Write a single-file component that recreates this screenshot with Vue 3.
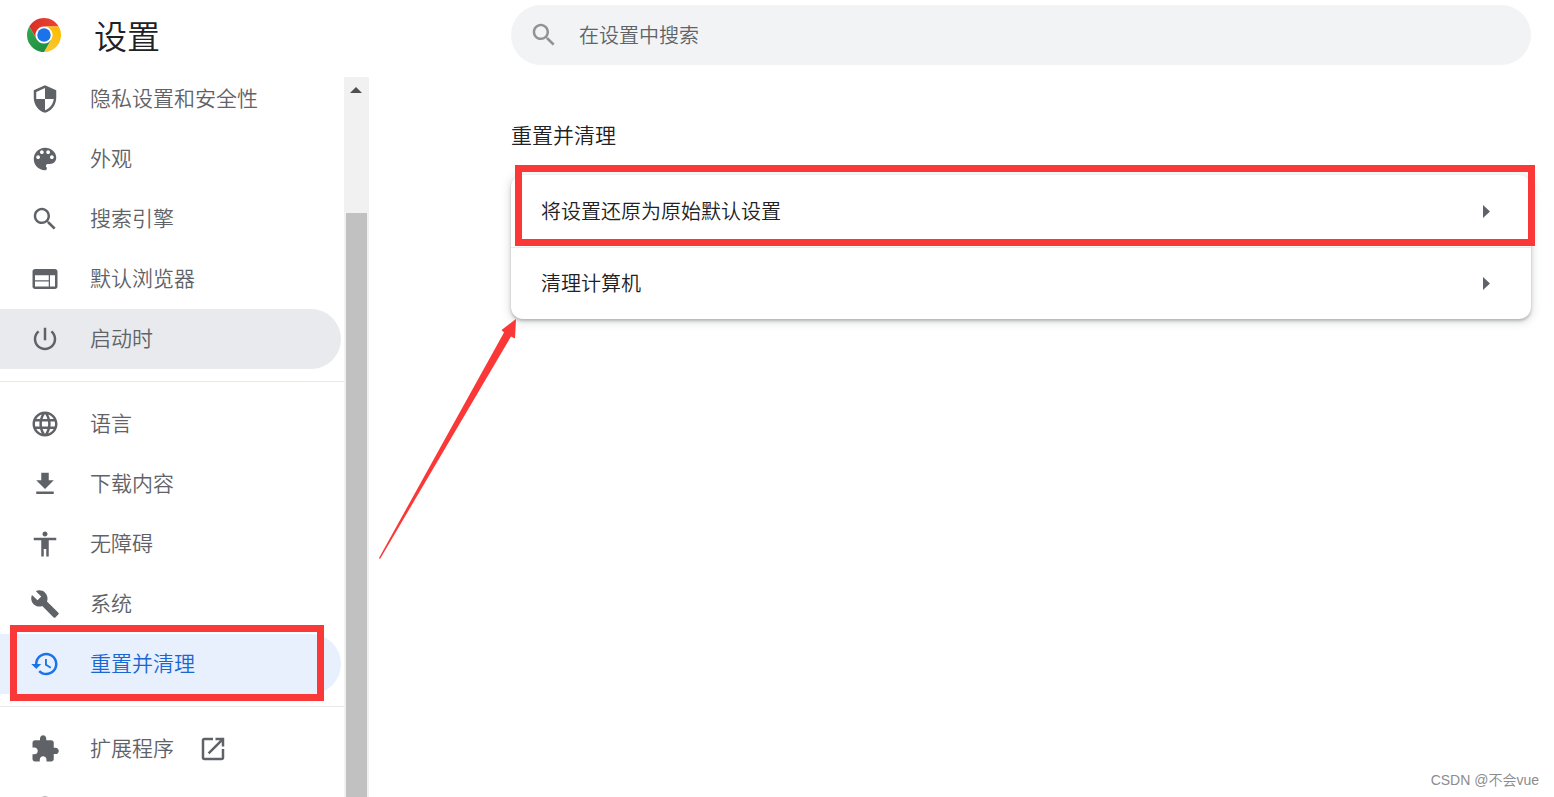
<template>
  <div class="settings">
    <header class="toolbar">
      <div class="brand">
        <svg class="logo" viewBox="0 0 48 48" aria-hidden="true">
          <defs>
            <linearGradient id="red" x1="3" y1="15" x2="45" y2="15" gradientUnits="userSpaceOnUse">
              <stop offset="0" stop-color="#d93025" />
              <stop offset="1" stop-color="#ea4335" />
            </linearGradient>
            <linearGradient id="yellow" x1="21" y1="48" x2="41" y2="12" gradientUnits="userSpaceOnUse">
              <stop offset="0" stop-color="#fcc934" />
              <stop offset="1" stop-color="#fbbc04" />
            </linearGradient>
            <linearGradient id="green" x1="27" y1="47" x2="6" y2="10" gradientUnits="userSpaceOnUse">
              <stop offset="0" stop-color="#1e8e3e" />
              <stop offset="1" stop-color="#34a853" />
            </linearGradient>
          </defs>
          <circle cx="24" cy="24" r="12" fill="#fff" />
          <path fill="url(#red)" d="M24 12h20.78a24 24 0 0 0-41.56 0L13.61 30A11.99 11.99 0 0 1 24 12z" />
          <path fill="url(#yellow)" d="M34.39 30 24 48a24 24 0 0 0 20.78-36H24a11.99 11.99 0 0 1 10.39 18z" />
          <path fill="url(#green)" d="M13.61 30 3.22 12A24 24 0 0 0 24 48l10.39-18a11.99 11.99 0 0 1-20.78 0z" />
          <circle cx="24" cy="24" r="9.5" fill="#1a73e8" />
        </svg>
        <h1>设置</h1>
      </div>
      <label class="search">
        <svg class="icon" viewBox="0 0 24 24" aria-hidden="true"><path :d="icons.search" /></svg>
        <input v-model="query" type="text" placeholder="在设置中搜索" aria-label="在设置中搜索" />
      </label>
    </header>

    <div class="content">
      <aside class="sidebar">
        <nav class="menu">
          <ul v-for="(group, i) in groups" :key="i">
            <li v-for="item in group" :key="item.icon">
              <a
                href="#"
                :class="{ hovered: item.hovered, selected: item.icon === current }"
                @click.prevent="current = item.icon"
              >
                <svg class="icon" viewBox="0 0 24 24" aria-hidden="true"><path :d="icons[item.icon]" /></svg>
                <span v-if="item.label">{{ item.label }}</span>
                <svg v-if="item.external" class="icon" viewBox="0 0 24 24" aria-hidden="true">
                  <path :d="icons.launch" />
                </svg>
              </a>
              <div v-if="item.marked" class="mark"></div>
            </li>
          </ul>
        </nav>
        <div class="scrollbar" aria-hidden="true">
          <svg class="scroll-up" viewBox="0 0 12 6"><path d="M0 6l6-6 6 6z" /></svg>
          <div class="thumb"></div>
        </div>
      </aside>

      <main>
        <h2>重置并清理</h2>
        <div class="card">
          <button v-for="row in rows" :key="row" type="button">
            <span>{{ row }}</span>
            <svg class="chevron" viewBox="0 0 7 13" aria-hidden="true"><path d="M0 0l7 6.5L0 13z" /></svg>
          </button>
          <div class="mark"></div>
          <svg class="arrow" viewBox="0 0 138 240" aria-hidden="true">
            <path d="M137 0L122.5 11L125 13.5L0 239L1 240L132 17.5L136 19.5z" />
          </svg>
        </div>
      </main>
    </div>

    <p class="credit">CSDN @不会vue</p>
  </div>
</template>

<script setup>
import { ref } from 'vue'

const query = ref('')
const current = ref('restore')

const groups = [
  [
    { label: '隐私设置和安全性', icon: 'security' },
    { label: '外观', icon: 'palette' },
    { label: '搜索引擎', icon: 'search' },
    { label: '默认浏览器', icon: 'web' },
    { label: '启动时', icon: 'power', hovered: true },
  ],
  [
    { label: '语言', icon: 'language' },
    { label: '下载内容', icon: 'download' },
    { label: '无障碍', icon: 'accessibility' },
    { label: '系统', icon: 'build' },
    { label: '重置并清理', icon: 'restore', marked: true },
  ],
  [
    { label: '扩展程序', icon: 'extension', external: true },
    { icon: 'chrome' },
  ],
]

const rows = ['将设置还原为原始默认设置', '清理计算机']

const icons = {
  security: 'M12 1L3 5v6c0 5.55 3.84 10.74 9 12 5.16-1.26 9-6.45 9-12V5l-9-4zm0 10.99h7c-.53 4.12-3.28 7.79-7 8.94V12H5V6.3l7-3.11v8.8z',
  palette: 'M12 3c-4.97 0-9 4.03-9 9s4.03 9 9 9c.83 0 1.5-.67 1.5-1.5 0-.39-.15-.74-.39-1.01-.23-.26-.38-.61-.38-.99 0-.83.67-1.5 1.5-1.5H16c2.76 0 5-2.24 5-5 0-4.42-4.03-8-9-8zm-5.5 9c-.83 0-1.5-.67-1.5-1.5S5.67 9 6.5 9 8 9.67 8 10.5 7.33 12 6.5 12zm3-4C8.67 8 8 7.33 8 6.5S8.67 5 9.5 5s1.5.67 1.5 1.5S10.33 8 9.5 8zm5 0c-.83 0-1.5-.67-1.5-1.5S13.67 5 14.5 5s1.5.67 1.5 1.5S15.33 8 14.5 8zm3 4c-.83 0-1.5-.67-1.5-1.5S16.67 9 17.5 9s1.5.67 1.5 1.5-.67 1.5-1.5 1.5z',
  search: 'M15.5 14h-.79l-.28-.27C15.41 12.59 16 11.11 16 9.5 16 5.91 13.09 3 9.5 3S3 5.91 3 9.5 5.91 16 9.5 16c1.61 0 3.09-.59 4.23-1.57l.27.28v.79l5 4.99L20.49 19l-4.99-5zm-6 0C7.01 14 5 11.99 5 9.5S7.01 5 9.5 5 14 7.01 14 9.5 11.99 14 9.5 14z',
  web: 'M20 4H4c-1.1 0-1.99.9-1.99 2L2 18c0 1.1.9 2 2 2h16c1.1 0 2-.9 2-2V6c0-1.1-.9-2-2-2zm-5 14H4v-4h11v4zm0-5H4V9h11v4zm5 5h-4V9h4v9z',
  power: 'M13 3h-2v10h2V3zm4.83 2.17l-1.42 1.42C17.99 7.86 19 9.81 19 12c0 3.87-3.13 7-7 7s-7-3.13-7-7c0-2.19 1.01-4.14 2.58-5.42L6.17 5.17C4.23 6.82 3 9.26 3 12c0 4.97 4.03 9 9 9s9-4.03 9-9c0-2.74-1.23-5.18-3.17-6.83z',
  language: 'M11.99 2C6.47 2 2 6.48 2 12s4.47 10 9.99 10C17.52 22 22 17.52 22 12S17.52 2 11.99 2zm6.93 6h-2.95c-.32-1.25-.78-2.45-1.38-3.56 1.84.63 3.37 1.91 4.33 3.56zM12 4.04c.83 1.2 1.48 2.53 1.91 3.96h-3.82c.43-1.43 1.08-2.76 1.91-3.96zM4.26 14C4.1 13.36 4 12.69 4 12s.1-1.36.26-2h3.38c-.08.66-.14 1.32-.14 2 0 .68.06 1.34.14 2H4.26zm.82 2h2.95c.32 1.25.78 2.45 1.38 3.56-1.84-.63-3.37-1.9-4.33-3.56zm2.95-8H5.08c.96-1.66 2.49-2.93 4.33-3.56C8.81 5.55 8.35 6.75 8.03 8zM12 19.96c-.83-1.2-1.48-2.53-1.91-3.96h3.82c-.43 1.43-1.08 2.76-1.91 3.96zM14.34 14H9.66c-.09-.66-.16-1.32-.16-2 0-.68.07-1.35.16-2h4.68c.09.65.16 1.32.16 2 0 .68-.07 1.34-.16 2zm.25 5.56c.6-1.11 1.06-2.31 1.38-3.56h2.95c-.96 1.65-2.49 2.93-4.33 3.56zM16.36 14c.08-.66.14-1.32.14-2 0-.68-.06-1.34-.14-2h3.38c.16.64.26 1.31.26 2s-.1 1.36-.26 2h-3.38z',
  download: 'M19 9h-4V3H9v6H5l7 7 7-7zM5 18v2h14v-2H5z',
  accessibility: 'M12 2c1.1 0 2 .9 2 2s-.9 2-2 2-2-.9-2-2 .9-2 2-2zm9 7h-6v13h-2v-6h-2v6H9V9H3V7h18v2z',
  build: 'M22.7 19l-9.1-9.1c.9-2.3.4-5-1.5-6.9-2-2-5-2.4-7.4-1.3L9 6 6 9 1.6 4.7C.4 7.1.9 10.1 2.9 12.1c1.9 1.9 4.6 2.4 6.9 1.5l9.1 9.1c.4.4 1 .4 1.4 0l2.3-2.3c.5-.4.5-1.1.1-1.4z',
  restore: 'M13 3c-4.97 0-9 4.03-9 9H1l3.89 3.89.07.14L9 12H6c0-3.87 3.13-7 7-7s7 3.13 7 7-3.13 7-7 7c-1.93 0-3.68-.79-4.94-2.06l-1.42 1.42C8.27 19.99 10.51 21 13 21c4.97 0 9-4.03 9-9s-4.03-9-9-9zm-1 5v5l4.28 2.54.72-1.21-3.5-2.08V8H12z',
  extension: 'M20.5 11H19V7c0-1.1-.9-2-2-2h-4V3.5C13 2.12 11.88 1 10.5 1S8 2.12 8 3.5V5H4c-1.1 0-1.99.9-1.99 2v3.8H3.5c1.49 0 2.7 1.21 2.7 2.7s-1.21 2.7-2.7 2.7H2V20c0 1.1.9 2 2 2h3.8v-1.5c0-1.49 1.21-2.7 2.7-2.7 1.49 0 2.7 1.21 2.7 2.7V22H17c1.1 0 2-.9 2-2v-4h1.5c1.38 0 2.5-1.12 2.5-2.5S21.88 11 20.5 11z',
  launch: 'M19 19H5V5h7V3H5c-1.11 0-2 .9-2 2v14c0 1.1.89 2 2 2h14c1.1 0 2-.9 2-2v-7h-2v7zM14 3v2h3.59l-9.83 9.83 1.41 1.41L19 6.41V10h2V3h-7z',
  chrome: 'M12 2a10 10 0 1 0 0 20 10 10 0 0 0 0-20zm0 2a8 8 0 0 1 7 4h-7a4 4 0 0 0-3.8 2.7L5.7 7A8 8 0 0 1 12 4z',
}
</script>

<style>
body {
  margin: 0;
  background: #fff;
}
</style>

<style scoped>
.settings {
  display: flex;
  flex-direction: column;
  height: 100vh;
  overflow: hidden;
  position: relative;
  color: #202124;
  font-family: 'Liberation Sans', 'Noto Sans CJK SC', sans-serif;
  font-weight: 350;
}
.toolbar {
  display: flex;
  flex: none;
  height: 77px;
}
.brand {
  display: flex;
  align-items: center;
  gap: 33px;
  width: 511px;
  height: 70px;
  padding-left: 27px;
  box-sizing: border-box;
}
.logo {
  width: 34px;
  height: 34px;
}
h1,
h2,
p,
ul {
  margin: 0;
  padding: 0;
  font-weight: inherit;
}
h1 {
  font-size: 33px;
}
.search {
  display: flex;
  flex: 1;
  align-items: center;
  height: 60px;
  margin: 5px 23px 0 0;
  padding: 0 18px;
  box-sizing: border-box;
  border-radius: 30px;
  background: #f1f3f4;
}
.search .icon {
  fill: #909396;
}
.search input {
  flex: 1;
  margin-left: 20px;
  padding: 2px 0 0;
  border: 0;
  outline: 0;
  background: none;
  color: inherit;
  font: inherit;
  font-size: 20px;
}
.search input::placeholder {
  color: #5f6368;
}
.icon {
  flex: none;
  width: 30px;
  height: 30px;
  fill: #5f6368;
}

.content {
  display: flex;
  flex: 1;
  min-height: 0;
}
.sidebar {
  display: flex;
  flex: none;
  width: 369px;
}
.menu {
  flex: 1;
  overflow: hidden;
}
.menu ul {
  list-style: none;
}
/* the list is scrolled a little past its first entry */
.menu ul:first-child {
  margin-top: -8px;
}
.menu ul + ul {
  margin-top: 12px;
  padding-top: 12px;
  border-top: 1px solid #e8e8e8;
}
.menu li {
  position: relative;
}
.menu a {
  display: flex;
  align-items: center;
  height: 60px;
  margin-right: 3px;
  padding-left: 30px;
  border-radius: 0 30px 30px 0;
  color: #5f6368;
  font-size: 21px;
  text-decoration: none;
}
.menu span {
  margin: 0 24px 0 30px;
  padding-bottom: 5px;
}
.menu .hovered {
  background: #e8eaed;
}
.menu .selected {
  background: #e8f0fe;
  color: #1967d2;
}
.menu .selected .icon {
  fill: #1a73e8;
}
.scrollbar {
  display: flex;
  flex-direction: column;
  width: 25px;
  background: #f1f1f1;
}
.scroll-up {
  flex: none;
  width: 12px;
  height: 6px;
  margin: 10px 6px 120px;
  fill: #505050;
}
.thumb {
  flex: 1;
  margin: 0 2px;
  background: #c1c1c1;
}

main {
  flex: 1;
  padding: 43px 23px 0 142px;
}
h2 {
  font-size: 21px;
  line-height: 32px;
}
.card {
  position: relative;
  margin-top: 23px;
  border-radius: 12px;
  box-shadow: 0 2px 3px rgba(60, 64, 67, 0.3), 0 2px 9px 2px rgba(60, 64, 67, 0.15);
}
.card button {
  display: flex;
  align-items: center;
  justify-content: space-between;
  width: 100%;
  height: 72px;
  padding: 0 41px 0 30px;
  border: 0;
  background: none;
  color: inherit;
  font: inherit;
  font-size: 20px;
}
.card button span {
  padding-bottom: 2px;
}
.card button + button {
  border-top: 1px solid #ebebeb;
}
.chevron {
  width: 7px;
  height: 13px;
  fill: #5f6368;
}

.mark {
  position: absolute;
  box-sizing: border-box;
  border: 7px solid #fb3838;
  pointer-events: none;
}
.menu .mark {
  inset: -9px 20px -7px 10px;
}
.card .mark {
  top: -10px;
  left: 4px;
  right: -4px;
  height: 81px;
}
.arrow {
  position: absolute;
  top: 144px;
  left: -132px;
  width: 138px;
  height: 240px;
  fill: #fb3838;
}
.credit {
  position: absolute;
  right: 15px;
  bottom: 8px;
  color: #8c8c8c;
  font-size: 14px;
}
</style>
